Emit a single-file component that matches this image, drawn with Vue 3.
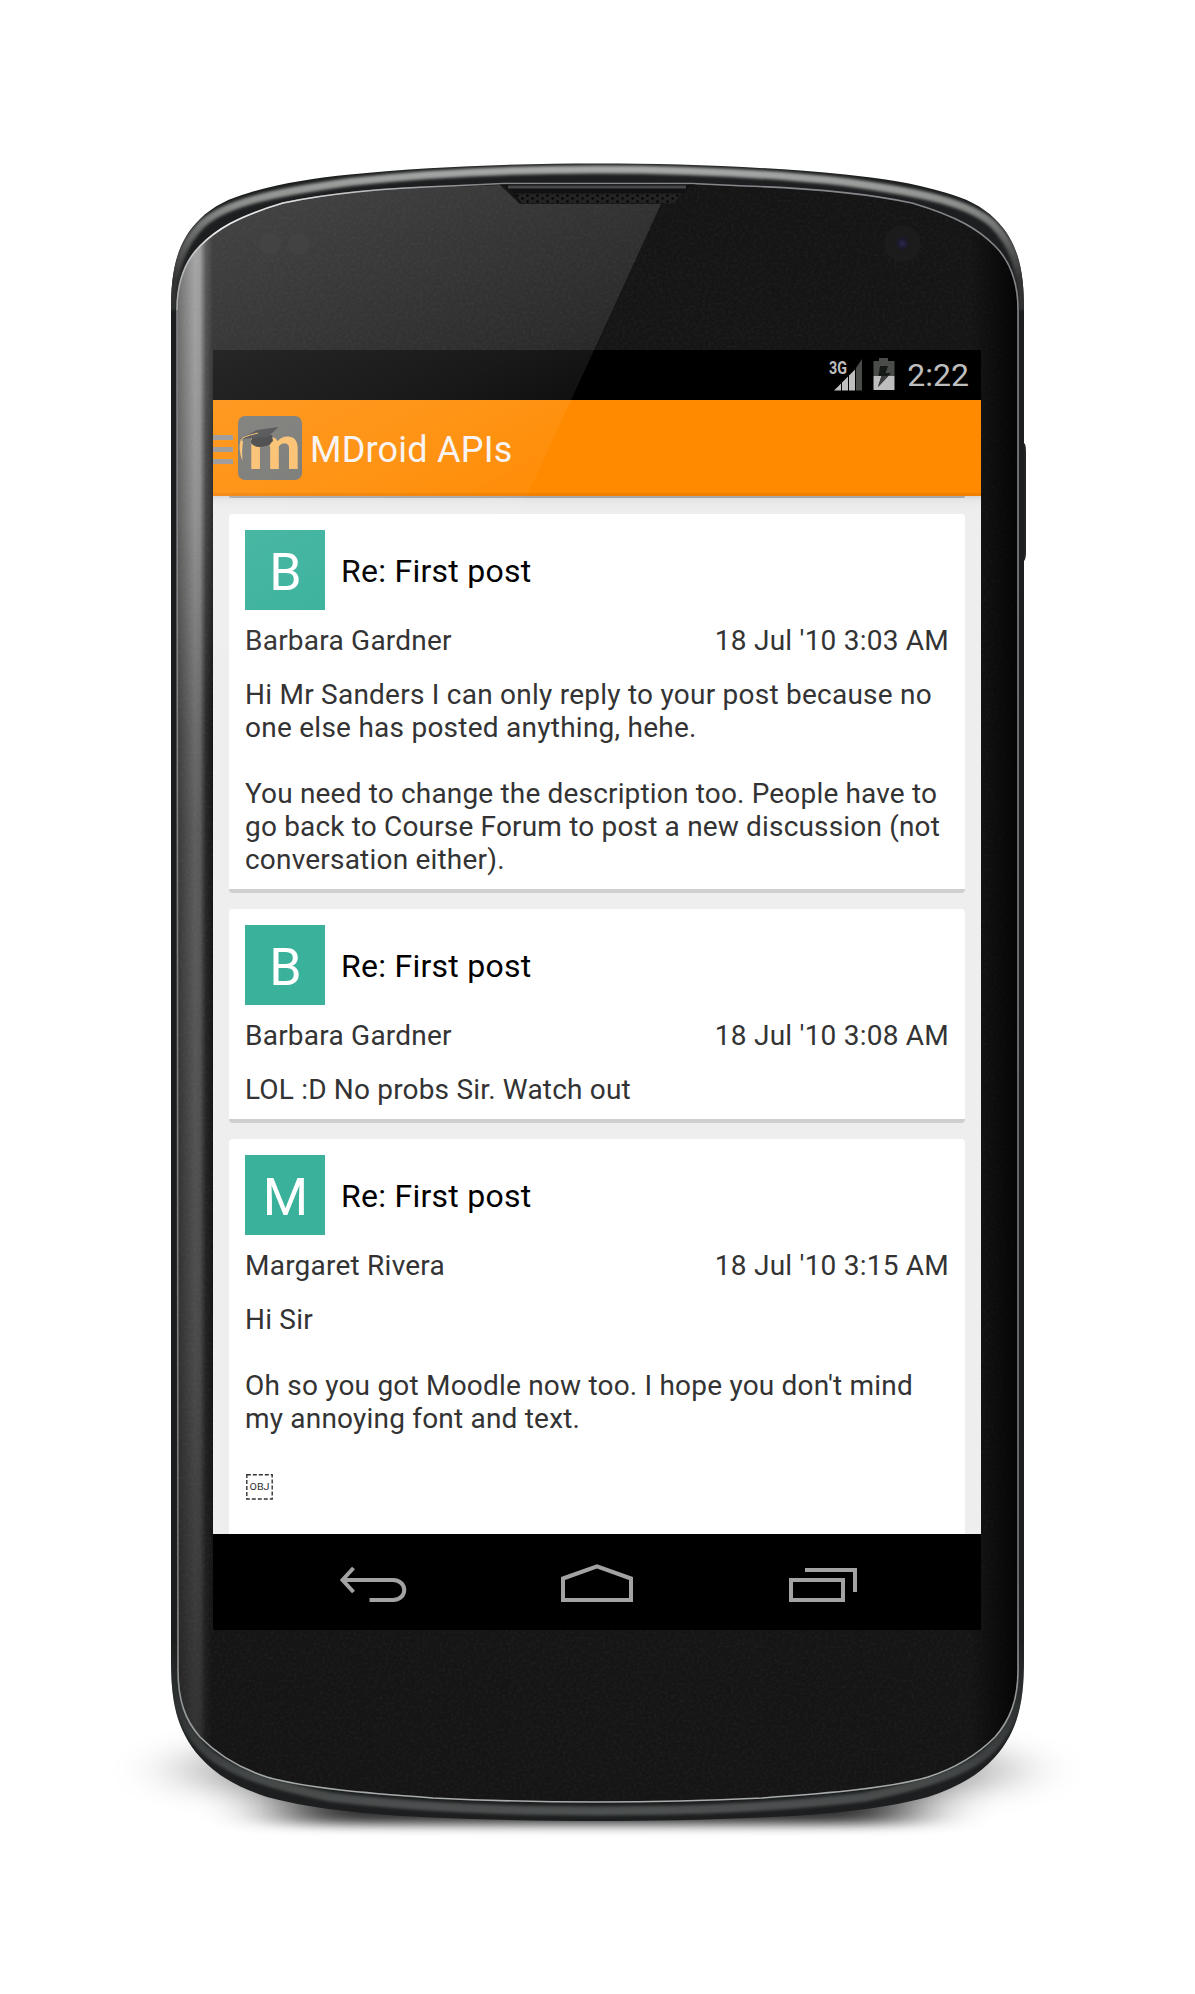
<script setup>
// Each text carries its own tracking (px) so line ends fall where the handset sets them.
const posts = [
  {
    initial: 'B',
    title: 'Re: First post',
    author: 'Barbara Gardner',
    date: "18 Jul '10 3:03 AM",
    lines: [
      { text: 'Hi Mr Sanders I can only reply to your post because no', track: 0.24 },
      { text: 'one else has posted anything, hehe.', track: 0.25 },
      { text: '', track: 0 },
      { text: 'You need to change the description too. People have to', track: 0.17 },
      { text: 'go back to Course Forum to post a new discussion (not', track: 0.17 },
      { text: 'conversation either).', track: 0.2 },
    ],
  },
  {
    initial: 'B',
    title: 'Re: First post',
    author: 'Barbara Gardner',
    date: "18 Jul '10 3:08 AM",
    lines: [{ text: 'LOL :D No probs Sir. Watch out', track: 0.18 }],
  },
  {
    initial: 'M',
    title: 'Re: First post',
    author: 'Margaret Rivera',
    date: "18 Jul '10 3:15 AM",
    lines: [
      { text: 'Hi Sir', track: 0.2 },
      { text: '', track: 0 },
      { text: "Oh so you got Moodle now too. I hope you don't mind", track: 0.2 },
      { text: 'my annoying font and text.', track: 0.2 },
      { text: '', track: 0 },
    ],
    attachment: true,
  },
]
</script>

<template>
  <main class="stage">
    <svg class="device" viewBox="0 0 1195 1994" aria-hidden="true">
      <defs>
        <clipPath id="faceClip">
          <path d="M177 310C177 285 184 262 200 246C216 230 236 217 283 203C340 191 400 187.500 450 186L503 183.500H692L745 186C795 187.500 855 191 912 203C959 217 979 230 995 246C1011 262 1018 285 1018 310V1670C1018 1700 1010 1720 995 1737C975 1757 950 1770 928 1777C890 1788 830 1793 762 1798C700 1801 640 1802 598 1802C555 1802 495 1801 433 1798C365 1793 305 1788 267 1777C245 1770 220 1757 200 1737C185 1720 178 1700 178 1670Z" />
        </clipPath>
        <linearGradient id="strip" x1="177" x2="213" y1="0" y2="0" gradientUnits="userSpaceOnUse">
          <stop offset="0" stop-color="#fff" stop-opacity=".35" />
          <stop offset=".5" stop-color="#fff" stop-opacity=".75" />
          <stop offset=".64" stop-color="#fff" stop-opacity=".7" />
          <stop offset=".8" stop-color="#fff" stop-opacity=".2" />
          <stop offset="1" stop-color="#fff" stop-opacity="0" />
        </linearGradient>
        <linearGradient id="stripFade" x1="0" x2="0" y1="200" y2="1780" gradientUnits="userSpaceOnUse">
          <stop offset="0" stop-color="#fff" stop-opacity=".72" />
          <stop offset=".2" stop-color="#fff" stop-opacity=".65" />
          <stop offset=".4" stop-color="#fff" stop-opacity=".42" />
          <stop offset=".75" stop-color="#fff" stop-opacity=".3" />
          <stop offset="1" stop-color="#fff" stop-opacity=".15" />
        </linearGradient>
        <mask id="stripMask"><rect x="170" y="180" width="60" height="1640" fill="url(#stripFade)" /></mask>
        <linearGradient id="rightDark" x1="970" x2="1018" y1="0" y2="0" gradientUnits="userSpaceOnUse">
          <stop offset="0" stop-color="#000" stop-opacity="0" />
          <stop offset="1" stop-color="#000" stop-opacity=".8" />
        </linearGradient>
        <linearGradient id="topRim" x1="0" x2="0" y1="163" y2="330" gradientUnits="userSpaceOnUse">
          <stop offset="0" stop-color="#a9acaa" />
          <stop offset=".25" stop-color="#8c8e8c" />
          <stop offset=".7" stop-color="#333" />
          <stop offset="1" stop-color="#2c2e2e" />
        </linearGradient>
        <linearGradient id="edge" x1="0" x2="0" y1="180" y2="1800" gradientUnits="userSpaceOnUse">
          <stop offset="0" stop-color="#85878b" />
          <stop offset=".85" stop-color="#77797a" />
          <stop offset="1" stop-color="#a9acac" />
        </linearGradient>
        <linearGradient id="cornerShine" x1="178" x2="480" y1="0" y2="0" gradientUnits="userSpaceOnUse">
          <stop offset="0" stop-color="#fff" stop-opacity=".3" />
          <stop offset=".12" stop-color="#fff" stop-opacity=".85" />
          <stop offset=".4" stop-color="#fff" stop-opacity=".7" />
          <stop offset="1" stop-color="#fff" stop-opacity="0" />
        </linearGradient>
        <linearGradient id="bottomRim" x1="0" x2="0" y1="1640" y2="1820" gradientUnits="userSpaceOnUse">
          <stop offset="0" stop-color="#3c3f3f" stop-opacity="0" />
          <stop offset=".6" stop-color="#3c3f3f" />
          <stop offset="1" stop-color="#505353" />
        </linearGradient>
        <radialGradient id="camera"><stop offset="0" stop-color="#2c2950" /><stop offset=".25" stop-color="#1c1a2c" /><stop offset=".4" stop-color="#1b1b1c" /><stop offset="1" stop-color="#1c1c1c" /></radialGradient>
        <pattern id="mesh" x="515" y="194" width="10" height="6" patternUnits="userSpaceOnUse">
          <rect width="10" height="6" fill="#232323" /><circle cx="2.500" cy="1.500" r="1.300" fill="#050505" /><circle cx="7.500" cy="4.500" r="1.300" fill="#050505" />
        </pattern>
        <filter id="soft" x="-30%" y="-80%" width="160%" height="260%"><feGaussianBlur stdDeviation="38 14" /></filter>
        <filter id="soft2" x="-30%" y="-80%" width="160%" height="260%"><feGaussianBlur stdDeviation="40 6" /></filter>
        <filter id="rimBlur"><feGaussianBlur stdDeviation="1.500" /></filter>
        <filter id="grain" x="0" y="0" width="100%" height="100%"><feTurbulence type="fractalNoise" baseFrequency=".35" numOctaves="2" /><feColorMatrix values="0 0 0 0 1 0 0 0 0 1 0 0 0 0 1 .25 0 0 0 -.09" /></filter>
        <clipPath id="outerClip"><path d="M171 310C171 275 175 243 200 219C213 206 230 198 250 192.500C281 183 315 178 350 174.500C430 166.500 520 163.500 597.500 163.500C675 163.500 765 166.500 845 174.500C880 178 914 183 945 192.500C965 198 982 206 995 219C1020 243 1024 275 1024 310V1660C1024 1700 1019 1730 995 1757C977 1777 955 1788 928 1797C875 1811 815 1815 762 1817.500C705 1820 650 1821 597.500 1821C545 1821 490 1820 433 1817.500C380 1815 320 1811 267 1797C240 1788 218 1777 200 1757C176 1730 171 1700 171 1660Z" /></clipPath>
      </defs>
      <ellipse cx="598" cy="1770" rx="415" ry="40" fill="#000" opacity=".36" filter="url(#soft)" />
      <rect x="290" y="1775" width="616" height="49" fill="#000" opacity=".8" filter="url(#soft2)" />
      <path d="M1022 443H1024Q1026 444 1026 452V552Q1026 559 1024 561H1022Z" fill="#242424" />
      <g clip-path="url(#outerClip)">
        <rect x="165" y="160" width="865" height="1665" fill="#1c1e1f" />
        <path d="M172 310C174 270 180 246 202 224C226 203 270 193 350 182C430 173 520 169.500 597.500 169.500C675 169.500 765 173 845 182C925 193 969 203 993 224C1015 246 1021 270 1023 310" fill="none" stroke="url(#topRim)" stroke-width="8" filter="url(#rimBlur)" />
        <path d="M172 1640C173 1700 180 1724 203 1748C226 1771 270 1785 330 1797C420 1808 520 1811 597.500 1811C675 1811 775 1808 865 1797C925 1785 969 1771 992 1748C1015 1724 1022 1700 1023 1640" fill="none" stroke="url(#bottomRim)" stroke-width="9" filter="url(#rimBlur)" />
      </g>
      <g clip-path="url(#faceClip)">
        <rect x="170" y="180" width="855" height="1630" fill="#151515" />
        <rect x="170" y="180" width="855" height="1630" filter="url(#grain)" opacity=".3" />
        <rect x="170" y="180" width="43" height="1630" fill="url(#strip)" mask="url(#stripMask)" />
        <rect x="965" y="180" width="60" height="1630" fill="url(#rightDark)" />
      </g>
      <path d="M177 310C177 285 184 262 200 246C216 230 236 217 283 203C340 191 400 187.500 450 186L503 183.500H692L745 186C795 187.500 855 191 912 203C959 217 979 230 995 246C1011 262 1018 285 1018 310V1670C1018 1700 1010 1720 995 1737C975 1757 950 1770 928 1777C890 1788 830 1793 762 1798C700 1801 640 1802 598 1802C555 1802 495 1801 433 1798C365 1793 305 1788 267 1777C245 1770 220 1757 200 1737C185 1720 178 1700 178 1670Z" fill="none" stroke="url(#edge)" stroke-width="1.600" />
      <path d="M177 310C177 285 184 262 200 246C216 230 236 217 283 203C340 191 400 187.500 450 186L480 184.500" fill="none" stroke="url(#cornerShine)" stroke-width="1.600" />
      <path d="M500 184.500C510 186 512 192 519 202Q521 204 525 204H664Q672 204 676 200L686 190Q690 186 696 184.500Z" fill="#111" />
      <path d="M508 187H686" stroke="#45474b" stroke-width="3" />
      <path d="M515 193.500H682L674 203.500H522Z" fill="url(#mesh)" />
      <circle cx="270" cy="244" r="11" fill="#1b1b1b" />
      <circle cx="299" cy="244" r="11" fill="#1b1b1b" />
      <circle cx="902.500" cy="243.500" r="18" fill="url(#camera)" />
    </svg>

    <section class="screen">
      <header class="status">
        <svg class="signal" viewBox="0 0 34 34">
          <text x="0" y="15.500" font-size="18" font-weight="700" fill="#bebebe" textLength="18" lengthAdjust="spacingAndGlyphs">3G</text>
          <path d="M5 32.500L12 25.500V32.500ZM13 24.500L19 18.500V32.500H13ZM20 17.500L26 11.500V32.500H20Z" fill="#bebebe" />
          <path d="M27 10L33 1V32.500H27Z" fill="#4a4c4a" />
        </svg>
        <svg class="battery" viewBox="0 0 22 32">
          <path d="M.500 3H6V0H15V3H21.500V18H.500Z" fill="#4a4c4a" />
          <path d="M.500 18H21.500V32H.500Z" fill="#bebebe" />
          <path d="M7 8H15L12.500 15H18L5 29L8.500 18H5.500Z" fill="#151a17" />
          <path d="M8.500 18H15.300L5 29Z" fill="#3c3e3c" />
        </svg>
        <span class="clock">2:22</span>
      </header>

      <div class="bar">
        <svg class="drawer" viewBox="0 0 20 29"><path d="M0 2.500H20M0 14.500H20M0 26.500H20" stroke="#949190" stroke-width="5" /></svg>
        <svg class="logo" viewBox="0 0 64 64">
          <rect width="64" height="64" rx="7" fill="#737470" />
          <text x="10" y="53" font-size="62" font-weight="700" fill="#fabd69" textLength="53" lengthAdjust="spacingAndGlyphs">m</text>
          <path d="M2.500 24Q0 34 4.500 45Q3.500 34 5 25Z" fill="#fabd69" />
          <path d="M13 24H25L34 22L32 29Q24 32 14 28Z" fill="#555" />
          <path d="M14 21L34 19L35 25Q30 31 20 31Q15 30 13 27Z" fill="#3d3d3f" />
          <path d="M2 23L19 14L40.500 11L30 21Z" fill="#47484a" />
          <path d="M3 24Q3 21 20 17" fill="none" stroke="#fabd69" stroke-width="1" />
        </svg>
        <h1>MDroid APIs</h1>
      </div>

      <div class="feed">
        <div class="prev"></div>
        <article v-for="(p, i) in posts" :key="i" class="card">
          <div class="head">
            <div class="avatar">{{ p.initial }}</div>
            <h2>{{ p.title }}</h2>
          </div>
          <div class="meta"><span>{{ p.author }}</span><span>{{ p.date }}</span></div>
          <div class="body">
            <p v-for="(l, j) in p.lines" :key="j" :style="{ letterSpacing: l.track + 'px' }">{{ l.text }}</p>
            <svg v-if="p.attachment" class="obj" viewBox="0 0 27 26">
              <rect x=".800" y=".800" width="25.400" height="24.200" fill="none" stroke="#333" stroke-width="1.400" stroke-dasharray="4 2" />
              <text x="3.500" y="16" font-size="9.500" fill="#333" textLength="20" lengthAdjust="spacingAndGlyphs">OBJ</text>
            </svg>
          </div>
        </article>
      </div>

      <nav class="nav">
        <svg class="back" viewBox="0 0 68 46"><path d="M14.500 8L3.500 20L14.500 32M3.500 20H54C69 20.500 69 39.500 54 40H30.500" /></svg>
        <svg class="home" viewBox="0 0 74 46"><path d="M3 18.500L37 6.300L71 18.500V40H3Z" /></svg>
        <svg class="recents" viewBox="0 0 71 46"><path d="M4 20H56V40H4ZM18 10H68V32" /></svg>
      </nav>
    </section>

    <svg class="glare" viewBox="0 0 1195 1994" aria-hidden="true">
      <defs>
        <linearGradient id="shine" x1="200" y1="180" x2="420" y2="616" gradientUnits="userSpaceOnUse">
          <stop offset="0" stop-color="#fff" stop-opacity=".21" /><stop offset=".6" stop-color="#fff" stop-opacity=".1" /><stop offset="1" stop-color="#fff" stop-opacity="0" />
        </linearGradient>
        <clipPath id="shineClip"><path d="M178 310C178 285 184 262 200 247C216 231 236 218 283 204C340 192 400 188.500 450 187L500 185L520 204H661L350 882H178Z" /></clipPath>
      </defs>
      <rect x="170" y="180" width="500" height="720" fill="url(#shine)" clip-path="url(#shineClip)" />
    </svg>
  </main>
</template>

<style>
body { background: #fff; }
</style>

<style scoped>
.stage {
  position: relative;
  box-sizing: border-box;
  width: 1195px;
  height: 1994px;
  padding: 350px 214px 0 213px;
  overflow: hidden;
  background: #fff;
  font-family: Roboto, "Noto Sans", sans-serif;
}
.device, .glare {
  position: absolute;
  inset: 0;
  width: 1195px;
  height: 1994px;
  pointer-events: none;
}
.screen {
  position: relative;
  display: flex;
  flex-direction: column;
  width: 768px;
  height: 1280px;
  background: #000;
}
.status {
  flex: none;
  display: flex;
  justify-content: flex-end;
  align-items: flex-start;
  box-sizing: border-box;
  height: 50px;
  padding: 8px 12px 0 0;
  color: #bebebe;
}
.signal { width: 34px; height: 34px; margin-right: 10px; overflow: visible; }
.battery { width: 22px; height: 32px; margin-right: 12px; }
.clock { font-size: 32px; line-height: 35px; }
.bar {
  flex: none;
  display: flex;
  align-items: center;
  box-sizing: border-box;
  height: 96px;
  background: #ff8a00;
  box-shadow: inset 0 -3px #f08000;
}
.drawer { width: 20px; height: 29px; margin: 3px 5px 0 0; }
.logo { width: 64px; height: 64px; margin-right: 8px; overflow: visible; }
h1 {
  margin: 0;
  padding-top: 3px;
  color: #f7f3f1;
  font-size: 36px;
  font-weight: 400;
  letter-spacing: 0.23px;
}
.feed {
  flex: 1;
  min-height: 0;
  overflow: hidden;
  padding: 0 16px;
  background: linear-gradient(#d5d5d5, #e6e6e6 4px, #ececec 10px, #eee 18px);
}
.prev { height: 2px; margin-bottom: 16px; background: #a5a7a8; border-radius: 0 0 4px 4px; }
.card {
  margin-bottom: 16px;
  padding: 16px 16px 0;
  background: #fff;
  border-bottom: 4px solid #cfcfcf;
  border-radius: 4px;
  color: #333;
  font-size: 28px;
}
.head { display: flex; align-items: center; gap: 16px; }
.avatar {
  box-sizing: border-box;
  width: 80px;
  height: 80px;
  padding-left: 1px;
  background: #39b19b;
  color: #fff;
  font-size: 52px;
  line-height: 86px;
  text-align: center;
}
h2 {
  margin: 0;
  padding-top: 2px;
  color: #000;
  font-size: 32px;
  font-weight: 400;
  letter-spacing: 0.27px;
}
.meta {
  display: flex;
  justify-content: space-between;
  padding-top: 14px;
  line-height: 33px;
  letter-spacing: 0.23px;
}
.body { padding: 21px 0 13px; line-height: 33px; white-space: nowrap; }
.body p { margin: 0; height: 33px; }
.obj { display: block; width: 27px; height: 26px; margin: 6px 0 60px 1px; overflow: visible; }
.nav {
  flex: none;
  display: flex;
  align-items: flex-start;
  gap: 153px;
  box-sizing: border-box;
  height: 96px;
  padding: 26px 0 0 126px;
  background: #000;
}
.nav svg { height: 46px; fill: none; stroke: #a3a3a3; stroke-width: 4; }
.back { width: 68px; }
.home { width: 74px; }
.recents { width: 71px; }
</style>
